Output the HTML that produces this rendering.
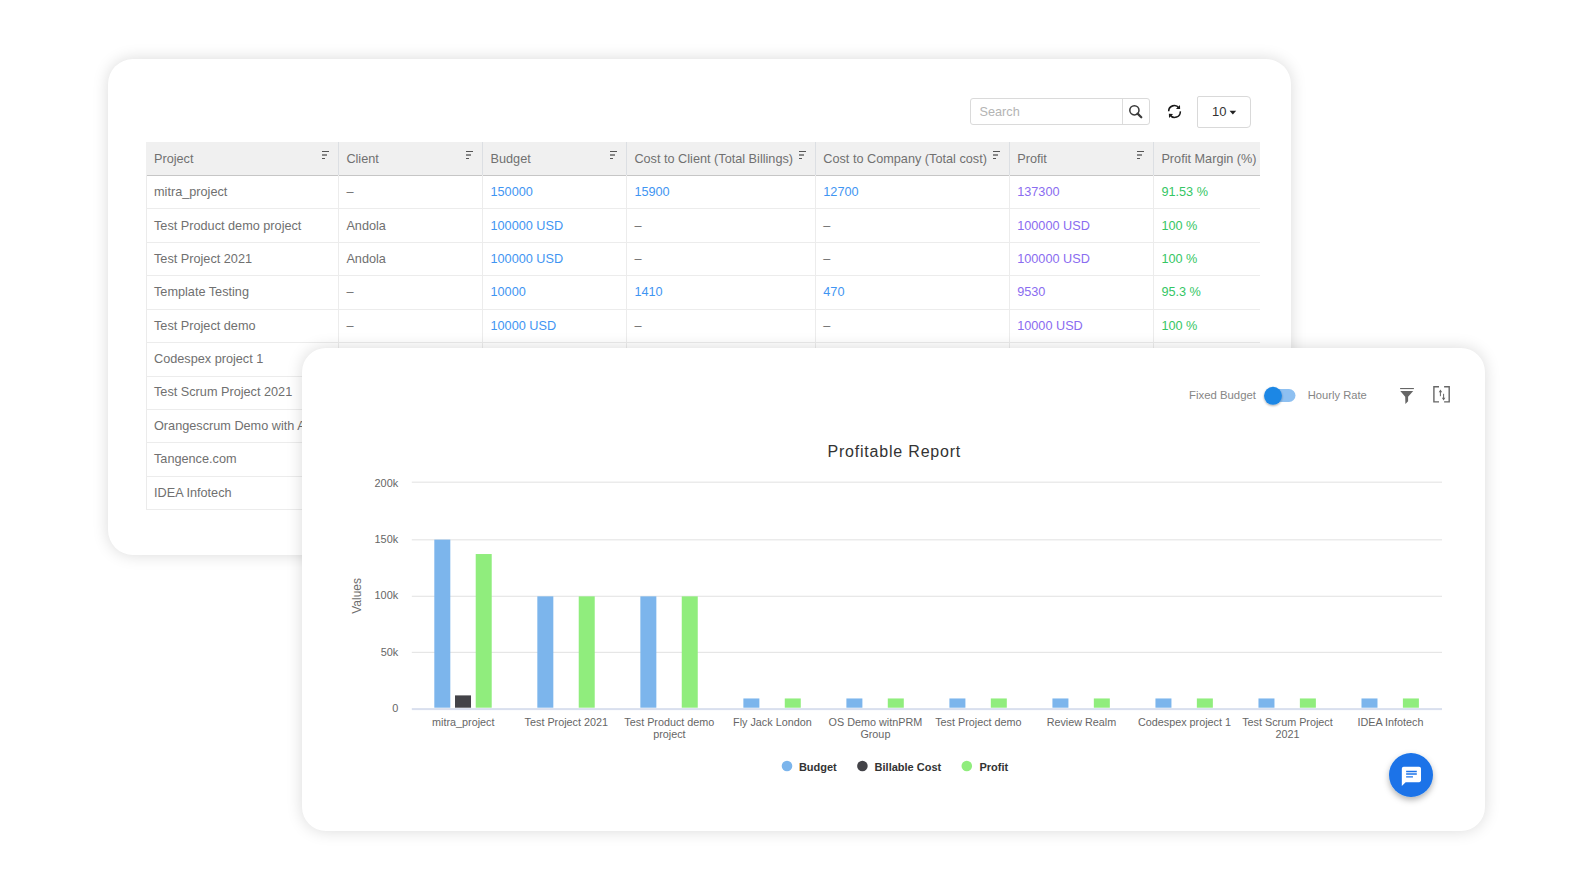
<!DOCTYPE html>
<html><head><meta charset="utf-8">
<style>
html,body{margin:0;padding:0;background:#fff;}
body{width:1573px;height:889px;position:relative;overflow:hidden;font-family:"Liberation Sans",sans-serif;}
.abs{position:absolute;}
.card{position:absolute;background:#fff;box-shadow:0 0 16px rgba(0,0,0,0.15);}
#c1{left:108px;top:59px;width:1183px;height:496px;border-radius:25px;}
#c2{left:302px;top:348px;width:1183px;height:483px;border-radius:24px;}
.t{position:absolute;white-space:nowrap;font-size:12.7px;line-height:33.45px;color:#707070;}
.th{position:absolute;top:142.7px;height:33px;line-height:33px;font-size:12.7px;color:#707070;white-space:nowrap;}
.hline{position:absolute;left:146px;width:1114px;height:1px;background:#ececec;}
.vline{position:absolute;width:1px;background:#ececec;}
.blue{color:#3f95f2;}
.pur{color:#8a6cf0;}
.grn{color:#35c664;}
.sort{position:absolute;width:8px;height:8px;}
.sort i{position:absolute;left:0;height:1.3px;}
</style></head><body>
<div class="card" id="c1"></div>
<div class="abs" style="left:970px;top:98.3px;width:179.5px;height:26.5px;border:1px solid #dadada;border-radius:3px;box-sizing:border-box;"></div>
<div class="abs" style="left:1122px;top:99px;width:1px;height:25px;background:#dcdcdc;"></div>
<div class="abs" style="left:979.5px;top:99px;line-height:27px;font-size:12.7px;color:#b4b4b4;">Search</div>
<svg class="abs" style="left:1127px;top:103px" width="16" height="16" viewBox="0 0 16 16"><circle cx="7.4" cy="7.3" r="4.6" fill="none" stroke="#3a3a3a" stroke-width="1.55"/><line x1="10.6" y1="10.6" x2="14.3" y2="14.3" stroke="#3a3a3a" stroke-width="2.2" stroke-linecap="round"/></svg>
<svg class="abs" style="left:1166px;top:103px" width="17" height="17" viewBox="0 0 17 17"><path d="M2.7 8.3 A5.6 5.6 0 0 1 12.9 5.0" fill="none" stroke="#1a1a1a" stroke-width="1.6"/><path d="M14.3 8.4 A5.6 5.6 0 0 1 4.1 12.0" fill="none" stroke="#1a1a1a" stroke-width="1.6"/><path d="M14.0 1.9 L14.1 6.0 L9.9 5.9 Z" fill="#1a1a1a"/><path d="M3.0 14.9 L2.9 10.8 L7.1 10.9 Z" fill="#1a1a1a"/></svg>
<div class="abs" style="left:1197px;top:96.3px;width:54px;height:32px;border:1px solid #d9d9d9;border-radius:2px 4px 4px 2px;box-sizing:border-box;"></div>
<div class="abs" style="left:1212px;top:96px;line-height:32px;font-size:13px;color:#333;">10</div>
<svg class="abs" style="left:1228.8px;top:109.7px" width="8" height="5" viewBox="0 0 8 5"><path d="M0.5 0.8 L7.2 0.8 L3.85 4.4 Z" fill="#222"/></svg>
<div class="abs" style="left:146px;top:142px;width:1114px;height:33px;background:#f0f0f0;"></div>
<div class="abs" style="left:146px;top:174.6px;width:1114px;height:1.3px;background:#c6c6c6;"></div>
<div class="th" style="left:154.0px">Project</div>
<div class="sort" style="left:322.2px;top:151px"><i style="top:0;width:7.2px;background:#555"></i><i style="top:3.4px;width:5.2px;background:#8a8a8a"></i><i style="top:6.9px;width:2.9px;background:#555"></i></div>
<div class="th" style="left:346.4px">Client</div>
<div class="sort" style="left:466.3px;top:151px"><i style="top:0;width:7.2px;background:#555"></i><i style="top:3.4px;width:5.2px;background:#8a8a8a"></i><i style="top:6.9px;width:2.9px;background:#555"></i></div>
<div class="th" style="left:490.5px">Budget</div>
<div class="sort" style="left:610.2px;top:151px"><i style="top:0;width:7.2px;background:#555"></i><i style="top:3.4px;width:5.2px;background:#8a8a8a"></i><i style="top:6.9px;width:2.9px;background:#555"></i></div>
<div class="th" style="left:634.4px">Cost to Client (Total Billings)</div>
<div class="sort" style="left:799.1px;top:151px"><i style="top:0;width:7.2px;background:#555"></i><i style="top:3.4px;width:5.2px;background:#8a8a8a"></i><i style="top:6.9px;width:2.9px;background:#555"></i></div>
<div class="th" style="left:823.3px">Cost to Company (Total cost)</div>
<div class="sort" style="left:993.0px;top:151px"><i style="top:0;width:7.2px;background:#555"></i><i style="top:3.4px;width:5.2px;background:#8a8a8a"></i><i style="top:6.9px;width:2.9px;background:#555"></i></div>
<div class="th" style="left:1017.2px">Profit</div>
<div class="sort" style="left:1137.2px;top:151px"><i style="top:0;width:7.2px;background:#555"></i><i style="top:3.4px;width:5.2px;background:#8a8a8a"></i><i style="top:6.9px;width:2.9px;background:#555"></i></div>
<div class="th" style="left:1161.4px">Profit Margin (%)</div>
<div class="vline" style="left:337.9px;top:142px;height:33px;background:#dcdfe3"></div>
<div class="vline" style="left:482.0px;top:142px;height:33px;background:#dcdfe3"></div>
<div class="vline" style="left:625.9px;top:142px;height:33px;background:#dcdfe3"></div>
<div class="vline" style="left:814.8px;top:142px;height:33px;background:#dcdfe3"></div>
<div class="vline" style="left:1008.7px;top:142px;height:33px;background:#dcdfe3"></div>
<div class="vline" style="left:1152.9px;top:142px;height:33px;background:#dcdfe3"></div>
<div class="vline" style="left:146px;top:175px;height:334.5px;background:#ebebeb"></div>
<div class="vline" style="left:337.9px;top:175px;height:334.5px"></div>
<div class="vline" style="left:482.0px;top:175px;height:334.5px"></div>
<div class="vline" style="left:625.9px;top:175px;height:334.5px"></div>
<div class="vline" style="left:814.8px;top:175px;height:334.5px"></div>
<div class="vline" style="left:1008.7px;top:175px;height:334.5px"></div>
<div class="vline" style="left:1152.9px;top:175px;height:334.5px"></div>
<div class="hline" style="top:208px"></div>
<div class="hline" style="top:242px"></div>
<div class="hline" style="top:275px"></div>
<div class="hline" style="top:309px"></div>
<div class="hline" style="top:342px"></div>
<div class="hline" style="top:376px"></div>
<div class="hline" style="top:409px"></div>
<div class="hline" style="top:442px"></div>
<div class="hline" style="top:476px"></div>
<div class="hline" style="top:509px"></div>
<div class="t" style="left:154.0px;top:175.70px">mitra_project</div>
<div class="t" style="left:346.4px;top:175.70px"><span style="letter-spacing:0">&ndash;</span></div>
<div class="t blue" style="left:490.5px;top:175.70px">150000</div>
<div class="t blue" style="left:634.4px;top:175.70px">15900</div>
<div class="t blue" style="left:823.3px;top:175.70px">12700</div>
<div class="t pur" style="left:1017.2px;top:175.70px">137300</div>
<div class="t grn" style="left:1161.4px;top:175.70px">91.53 %</div>
<div class="t" style="left:154.0px;top:209.70px">Test Product demo project</div>
<div class="t" style="left:346.4px;top:209.70px">Andola</div>
<div class="t blue" style="left:490.5px;top:209.70px">100000 USD</div>
<div class="t" style="left:634.4px;top:209.70px"><span style="letter-spacing:0">&ndash;</span></div>
<div class="t" style="left:823.3px;top:209.70px"><span style="letter-spacing:0">&ndash;</span></div>
<div class="t pur" style="left:1017.2px;top:209.70px">100000 USD</div>
<div class="t grn" style="left:1161.4px;top:209.70px">100 %</div>
<div class="t" style="left:154.0px;top:242.70px">Test Project 2021</div>
<div class="t" style="left:346.4px;top:242.70px">Andola</div>
<div class="t blue" style="left:490.5px;top:242.70px">100000 USD</div>
<div class="t" style="left:634.4px;top:242.70px"><span style="letter-spacing:0">&ndash;</span></div>
<div class="t" style="left:823.3px;top:242.70px"><span style="letter-spacing:0">&ndash;</span></div>
<div class="t pur" style="left:1017.2px;top:242.70px">100000 USD</div>
<div class="t grn" style="left:1161.4px;top:242.70px">100 %</div>
<div class="t" style="left:154.0px;top:275.70px">Template Testing</div>
<div class="t" style="left:346.4px;top:275.70px"><span style="letter-spacing:0">&ndash;</span></div>
<div class="t blue" style="left:490.5px;top:275.70px">10000</div>
<div class="t blue" style="left:634.4px;top:275.70px">1410</div>
<div class="t blue" style="left:823.3px;top:275.70px">470</div>
<div class="t pur" style="left:1017.2px;top:275.70px">9530</div>
<div class="t grn" style="left:1161.4px;top:275.70px">95.3 %</div>
<div class="t" style="left:154.0px;top:309.70px">Test Project demo</div>
<div class="t" style="left:346.4px;top:309.70px"><span style="letter-spacing:0">&ndash;</span></div>
<div class="t blue" style="left:490.5px;top:309.70px">10000 USD</div>
<div class="t" style="left:634.4px;top:309.70px"><span style="letter-spacing:0">&ndash;</span></div>
<div class="t" style="left:823.3px;top:309.70px"><span style="letter-spacing:0">&ndash;</span></div>
<div class="t pur" style="left:1017.2px;top:309.70px">10000 USD</div>
<div class="t grn" style="left:1161.4px;top:309.70px">100 %</div>
<div class="t" style="left:154.0px;top:342.70px">Codespex project 1</div>
<div class="t" style="left:346.4px;top:342.70px"><span style="letter-spacing:0">&ndash;</span></div>
<div class="t blue" style="left:490.5px;top:342.70px">10000</div>
<div class="t" style="left:634.4px;top:342.70px"><span style="letter-spacing:0">&ndash;</span></div>
<div class="t" style="left:823.3px;top:342.70px"><span style="letter-spacing:0">&ndash;</span></div>
<div class="t pur" style="left:1017.2px;top:342.70px">10000</div>
<div class="t grn" style="left:1161.4px;top:342.70px">100 %</div>
<div class="t" style="left:154.0px;top:375.70px">Test Scrum Project 2021</div>
<div class="t" style="left:346.4px;top:375.70px"><span style="letter-spacing:0">&ndash;</span></div>
<div class="t blue" style="left:490.5px;top:375.70px">10000</div>
<div class="t" style="left:634.4px;top:375.70px"><span style="letter-spacing:0">&ndash;</span></div>
<div class="t" style="left:823.3px;top:375.70px"><span style="letter-spacing:0">&ndash;</span></div>
<div class="t pur" style="left:1017.2px;top:375.70px">10000</div>
<div class="t grn" style="left:1161.4px;top:375.70px">100 %</div>
<div class="t" style="left:154.0px;top:409.70px">Orangescrum Demo with API</div>
<div class="t" style="left:346.4px;top:409.70px"><span style="letter-spacing:0">&ndash;</span></div>
<div class="t blue" style="left:490.5px;top:409.70px">10000</div>
<div class="t" style="left:634.4px;top:409.70px"><span style="letter-spacing:0">&ndash;</span></div>
<div class="t" style="left:823.3px;top:409.70px"><span style="letter-spacing:0">&ndash;</span></div>
<div class="t pur" style="left:1017.2px;top:409.70px">10000</div>
<div class="t grn" style="left:1161.4px;top:409.70px">100 %</div>
<div class="t" style="left:154.0px;top:442.70px">Tangence.com</div>
<div class="t" style="left:346.4px;top:442.70px"><span style="letter-spacing:0">&ndash;</span></div>
<div class="t blue" style="left:490.5px;top:442.70px">10000</div>
<div class="t" style="left:634.4px;top:442.70px"><span style="letter-spacing:0">&ndash;</span></div>
<div class="t" style="left:823.3px;top:442.70px"><span style="letter-spacing:0">&ndash;</span></div>
<div class="t pur" style="left:1017.2px;top:442.70px">10000</div>
<div class="t grn" style="left:1161.4px;top:442.70px">100 %</div>
<div class="t" style="left:154.0px;top:476.70px">IDEA Infotech</div>
<div class="t" style="left:346.4px;top:476.70px"><span style="letter-spacing:0">&ndash;</span></div>
<div class="t blue" style="left:490.5px;top:476.70px">10000</div>
<div class="t" style="left:634.4px;top:476.70px"><span style="letter-spacing:0">&ndash;</span></div>
<div class="t" style="left:823.3px;top:476.70px"><span style="letter-spacing:0">&ndash;</span></div>
<div class="t pur" style="left:1017.2px;top:476.70px">10000</div>
<div class="t grn" style="left:1161.4px;top:476.70px">100 %</div>
<div class="card" id="c2"></div>
<svg class="abs" style="left:0;top:0" width="1573" height="889" viewBox="0 0 1573 889" font-family="Liberation Sans, sans-serif">
<text x="1189" y="398.8" font-size="11.3" fill="#868686" textLength="67" lengthAdjust="spacingAndGlyphs">Fixed Budget</text>
<text x="1307.8" y="398.8" font-size="11.3" fill="#868686" textLength="59" lengthAdjust="spacingAndGlyphs">Hourly Rate</text>
<defs><filter id="ksh" x="-50%" y="-50%" width="200%" height="200%"><feDropShadow dx="0" dy="1" stdDeviation="1.2" flood-color="#000" flood-opacity="0.35"/></filter><filter id="fsh" x="-50%" y="-50%" width="200%" height="200%"><feDropShadow dx="0" dy="3" stdDeviation="3" flood-color="#000" flood-opacity="0.3"/></filter></defs>
<rect x="1266" y="389" width="29.5" height="13" rx="6.5" fill="#8ec0f1"/>
<circle cx="1273" cy="395.8" r="9" fill="#1f87e5" filter="url(#ksh)"/>
<rect x="1400.1" y="388" width="13.8" height="1.1" fill="#666"/>
<path d="M1400.3 390.9 L1413.2 390.9 L1408.1 396.8 L1408.1 401.2 L1405.4 403.9 L1405.2 396.8 Z" fill="#666"/>
<path d="M1439 386.7 L1433.9 386.7 L1433.9 401.9 L1439 401.9" fill="none" stroke="#666" stroke-width="1.4"/>
<path d="M1444.1 386.7 L1449.2 386.7 L1449.2 401.9 L1444.1 401.9" fill="none" stroke="#666" stroke-width="1.4"/>
<path d="M1440.4 392 L1440.4 396.2" fill="none" stroke="#666" stroke-width="1"/><path d="M1438.7 392.2 L1440.45 389.5 L1442.2 392.2 Z" fill="#666"/>
<path d="M1443.6 393.8 L1443.6 398" fill="none" stroke="#666" stroke-width="1"/><path d="M1441.85 397.8 L1443.6 400.4 L1445.35 397.8 Z" fill="#666"/>
<text x="894.3" y="456.8" font-size="16" fill="#333" text-anchor="middle" letter-spacing="0.8">Profitable Report</text>
<rect x="411.8" y="651.80" width="1030.2" height="1.2" fill="#e6e6e6"/>
<rect x="411.8" y="595.70" width="1030.2" height="1.2" fill="#e6e6e6"/>
<rect x="411.8" y="539.20" width="1030.2" height="1.2" fill="#e6e6e6"/>
<rect x="411.8" y="481.60" width="1030.2" height="1.2" fill="#e6e6e6"/>
<text x="398.2" y="712.00" font-size="10.9" fill="#666" text-anchor="end">0</text>
<text x="398.2" y="655.50" font-size="10.9" fill="#666" text-anchor="end">50k</text>
<text x="398.2" y="599.30" font-size="10.9" fill="#666" text-anchor="end">100k</text>
<text x="398.2" y="542.90" font-size="10.9" fill="#666" text-anchor="end">150k</text>
<text x="398.2" y="486.50" font-size="10.9" fill="#666" text-anchor="end">200k</text>
<text transform="translate(361 595.9) rotate(-90)" x="0" y="0" font-size="12" fill="#6e6e6e" text-anchor="middle">Values</text>
<rect x="434.31" y="539.62" width="16" height="168.08" fill="#7cb5ec"/>
<rect x="455.01" y="695.39" width="16" height="12.31" fill="#434348"/>
<rect x="475.71" y="554.03" width="16" height="153.67" fill="#90ed7d"/>
<text x="463.31" y="725.70" font-size="10.8" fill="#666" text-anchor="middle">mitra_project</text>
<rect x="537.33" y="596.35" width="16" height="111.35" fill="#7cb5ec"/>
<rect x="578.73" y="596.35" width="16" height="111.35" fill="#90ed7d"/>
<text x="566.33" y="725.70" font-size="10.8" fill="#666" text-anchor="middle">Test Project 2021</text>
<rect x="640.35" y="596.35" width="16" height="111.35" fill="#7cb5ec"/>
<rect x="681.75" y="596.35" width="16" height="111.35" fill="#90ed7d"/>
<text x="669.35" y="725.70" font-size="10.8" fill="#666" text-anchor="middle">Test Product demo</text>
<text x="669.35" y="738.00" font-size="10.8" fill="#666" text-anchor="middle">project</text>
<rect x="743.37" y="698.46" width="16" height="9.25" fill="#7cb5ec"/>
<rect x="784.77" y="698.46" width="16" height="9.25" fill="#90ed7d"/>
<text x="772.37" y="725.70" font-size="10.8" fill="#666" text-anchor="middle">Fly Jack London</text>
<rect x="846.39" y="698.46" width="16" height="9.25" fill="#7cb5ec"/>
<rect x="887.79" y="698.46" width="16" height="9.25" fill="#90ed7d"/>
<text x="875.39" y="725.70" font-size="10.8" fill="#666" text-anchor="middle">OS Demo witnPRM</text>
<text x="875.39" y="738.00" font-size="10.8" fill="#666" text-anchor="middle">Group</text>
<rect x="949.41" y="698.46" width="16" height="9.25" fill="#7cb5ec"/>
<rect x="990.81" y="698.46" width="16" height="9.25" fill="#90ed7d"/>
<text x="978.41" y="725.70" font-size="10.8" fill="#666" text-anchor="middle">Test Project demo</text>
<rect x="1052.43" y="698.46" width="16" height="9.25" fill="#7cb5ec"/>
<rect x="1093.83" y="698.46" width="16" height="9.25" fill="#90ed7d"/>
<text x="1081.43" y="725.70" font-size="10.8" fill="#666" text-anchor="middle">Review Realm</text>
<rect x="1155.45" y="698.46" width="16" height="9.25" fill="#7cb5ec"/>
<rect x="1196.85" y="698.46" width="16" height="9.25" fill="#90ed7d"/>
<text x="1184.45" y="725.70" font-size="10.8" fill="#666" text-anchor="middle">Codespex project 1</text>
<rect x="1258.47" y="698.46" width="16" height="9.25" fill="#7cb5ec"/>
<rect x="1299.87" y="698.46" width="16" height="9.25" fill="#90ed7d"/>
<text x="1287.47" y="725.70" font-size="10.8" fill="#666" text-anchor="middle">Test Scrum Project</text>
<text x="1287.47" y="738.00" font-size="10.8" fill="#666" text-anchor="middle">2021</text>
<rect x="1361.49" y="698.46" width="16" height="9.25" fill="#7cb5ec"/>
<rect x="1402.89" y="698.46" width="16" height="9.25" fill="#90ed7d"/>
<text x="1390.49" y="725.70" font-size="10.8" fill="#666" text-anchor="middle">IDEA Infotech</text>
<rect x="411.8" y="708.10" width="1030.2" height="2" fill="#d9dfee"/>
<circle cx="787" cy="766" r="5.3" fill="#7cb5ec"/>
<text x="798.9" y="770.7" font-size="11" font-weight="bold" fill="#333">Budget</text>
<circle cx="862.4" cy="766" r="5.3" fill="#434348"/>
<text x="874.6" y="770.7" font-size="11" font-weight="bold" fill="#333">Billable Cost</text>
<circle cx="966.8" cy="766" r="5.3" fill="#90ed7d"/>
<text x="979.5" y="770.7" font-size="11" font-weight="bold" fill="#333">Profit</text>
<circle cx="1411" cy="775" r="22" fill="#1a73e8" filter="url(#fsh)"/>
<g transform="translate(1399.9 764.9) scale(0.96)"><path fill-rule="evenodd" d="M20 2H4c-1.1 0-1.99.9-1.99 2L2 22l4-4h14c1.1 0 2-.9 2-2V4c0-1.1-.9-2-2-2z M6.5 6.15h11.1v1.5H6.5z M6.5 8.8h11.1v1.5H6.5z M6.5 11.7h7.1v1.5H6.5z" fill="#fff"/></g>
</svg>
</body></html>
